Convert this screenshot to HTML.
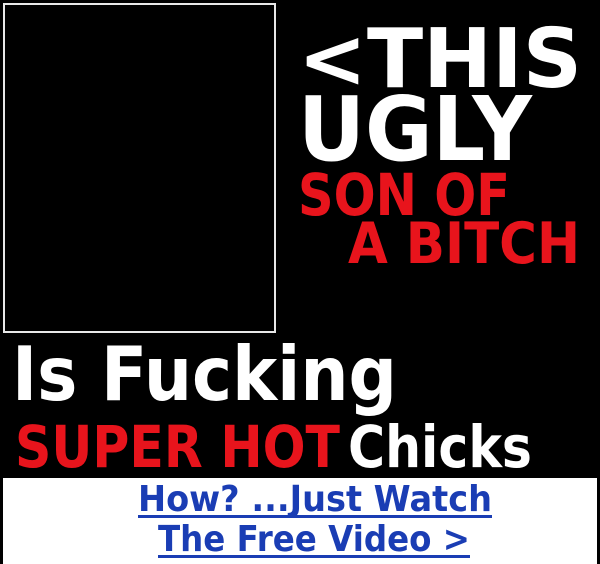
<!DOCTYPE html>
<html><head><style>
html,body{margin:0;padding:0;background:#000;width:600px;height:564px;overflow:hidden}
svg{display:block}
text{font-family:"DejaVu Sans","Liberation Sans",sans-serif;font-weight:bold}
</style></head><body>
<svg width="600" height="564" viewBox="0 0 600 564">
<rect x="0" y="0" width="600" height="564" fill="#000"/>
<rect x="4" y="4" width="271" height="328" fill="#000" stroke="#e8e8e8" stroke-width="2"/>
<rect x="3" y="478" width="594" height="86" fill="#fff"/>
<text x="298" y="87" font-size="82" fill="#fff" textLength="284" lengthAdjust="spacingAndGlyphs">&lt;THIS</text>
<text x="298" y="160" font-size="89" fill="#fff" textLength="234" lengthAdjust="spacingAndGlyphs">UGLY</text>
<text x="298" y="215" font-size="58" fill="#e8141c" textLength="212" lengthAdjust="spacingAndGlyphs">SON OF</text>
<text x="348" y="263" font-size="57" fill="#e8141c" textLength="232" lengthAdjust="spacingAndGlyphs">A BITCH</text>
<text x="12" y="400" font-size="75" fill="#fff" textLength="385" lengthAdjust="spacingAndGlyphs">Is Fucking</text>
<text x="15" y="467" font-size="58" fill="#e8141c" textLength="325" lengthAdjust="spacingAndGlyphs">SUPER HOT</text>
<text x="348" y="467" font-size="58" fill="#fff" textLength="184" lengthAdjust="spacingAndGlyphs">Chicks</text>
<text x="138" y="511" font-size="36" fill="#1a3db4" textLength="354" lengthAdjust="spacingAndGlyphs">How? ...Just Watch</text>
<rect x="138" y="515" width="354" height="3" fill="#1a3db4"/>
<text x="158" y="551" font-size="36" fill="#1a3db4" textLength="312" lengthAdjust="spacingAndGlyphs">The Free Video &gt;</text>
<rect x="158" y="555" width="312" height="3" fill="#1a3db4"/>
</svg>
</body></html>
